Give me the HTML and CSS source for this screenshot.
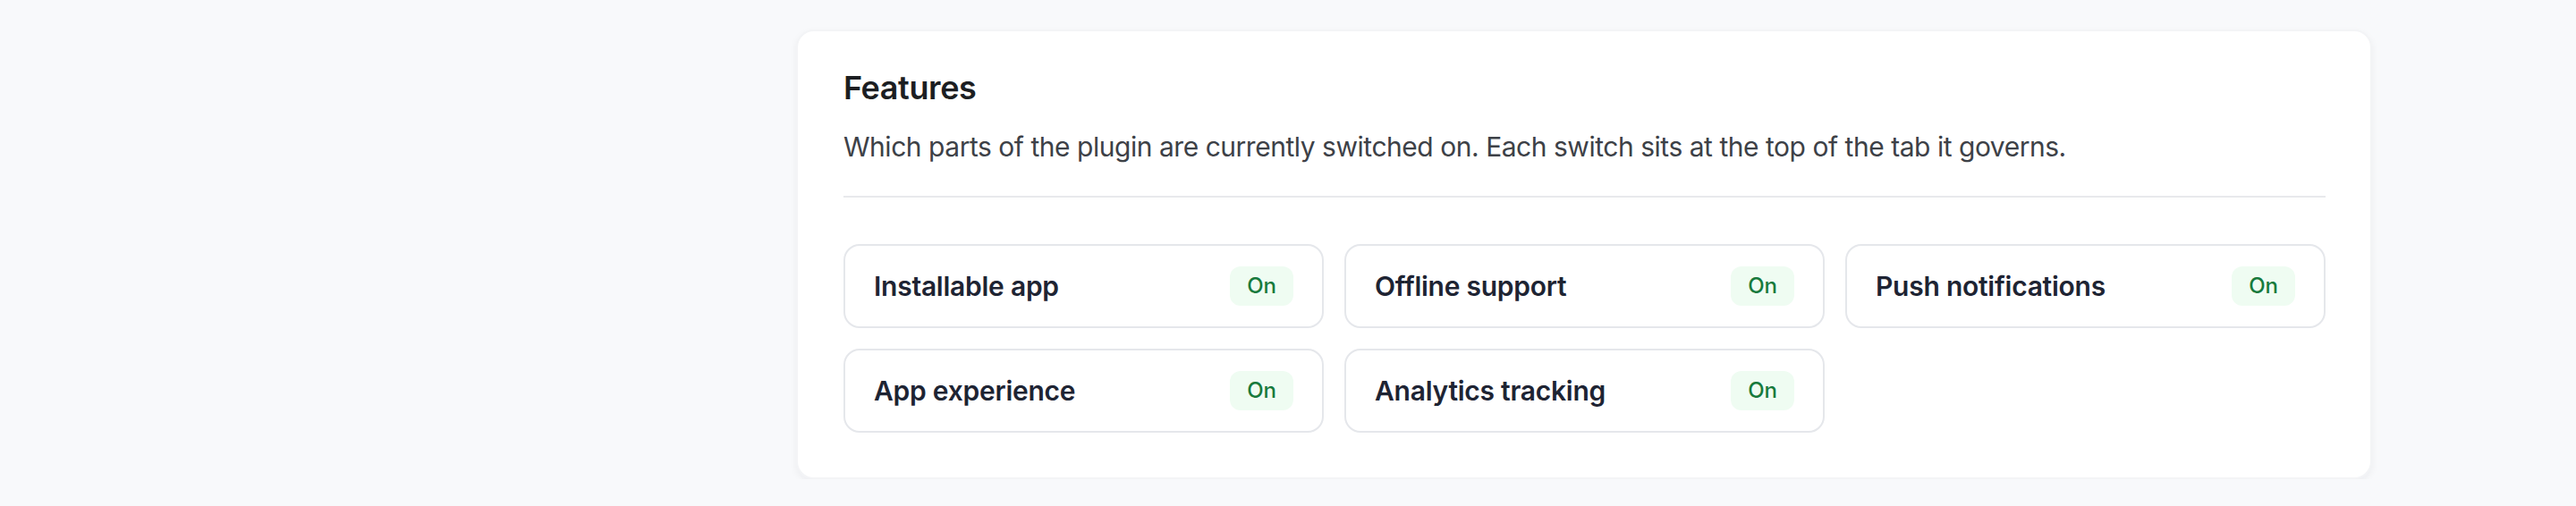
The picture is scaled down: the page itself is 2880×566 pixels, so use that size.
FILE: index.html
```html
<!DOCTYPE html>
<html>
<head>
  <title>Features</title>
  <link rel="stylesheet" href="styles.css">
</head>
<body>
  <div class="content">
    <div class="card">
      <div class="card-header">
        <h2>Features</h2>
        <p class="description">Which parts of the plugin are currently switched on. Each switch sits at the top of the tab it governs.</p>
      </div>

      <div class="feature-grid">
        <div class="feature">
          <span class="feature-name">Installable app</span>
          <span class="badge">On</span>
        </div>
        <div class="feature">
          <span class="feature-name">Offline support</span>
          <span class="badge">On</span>
        </div>
        <div class="feature">
          <span class="feature-name">Push notifications</span>
          <span class="badge">On</span>
        </div>
        <div class="feature">
          <span class="feature-name">App experience</span>
          <span class="badge">On</span>
        </div>
        <div class="feature">
          <span class="feature-name">Analytics tracking</span>
          <span class="badge">On</span>
        </div>
      </div>
    </div>
  </div>
</body>
</html>
```

FILE: styles.css
```css
body {
  margin: 0;
  font-family: Inter, "Noto Sans", sans-serif;
  background-color: #f8f9fb;
  color: #1f2430;
}
.content {
  width: 1762px;
  margin: 33px 0 0 890px;
}
.card {
  background-color: #fff;
  border: 2px solid #f3f4f6;
  border-radius: 20px;
  box-shadow: 0 3px 8px rgba(15, 23, 42, 0.05);
  padding: 39px 50px 50px 51px;
}
.card-header {
  padding-bottom: 32px;
  border-bottom: 2px solid #e8e9ec;
}
h2 {
  margin: 0;
  font-size: 36px;
  line-height: 48px;
  font-weight: 600;
  letter-spacing: -0.4px;
  color: #1c1e22;
}
.description {
  margin: 20px 0 0 0;
  font-size: 30px;
  line-height: 45px;
  letter-spacing: -0.47px;
  color: #3d4147;
}
.feature-grid {
  display: grid;
  grid-template-columns: repeat(3, 1fr);
  gap: 23px;
  margin-top: 52px;
}
.feature {
  display: flex;
  align-items: center;
  justify-content: space-between;
  height: 90px;
  padding: 0 32px;
  border: 2px solid #e5e7eb;
  border-radius: 18px;
}
.feature-name {
  font-size: 30px;
  line-height: 45px;
  font-weight: 600;
  letter-spacing: -0.25px;
  color: #1e2433;
}
.badge {
  font-size: 24px;
  line-height: 32px;
  font-weight: 500;
  color: #177a3c;
  background-color: #effcf2;
  border-radius: 12px;
  padding: 6px 19px;
}
```
